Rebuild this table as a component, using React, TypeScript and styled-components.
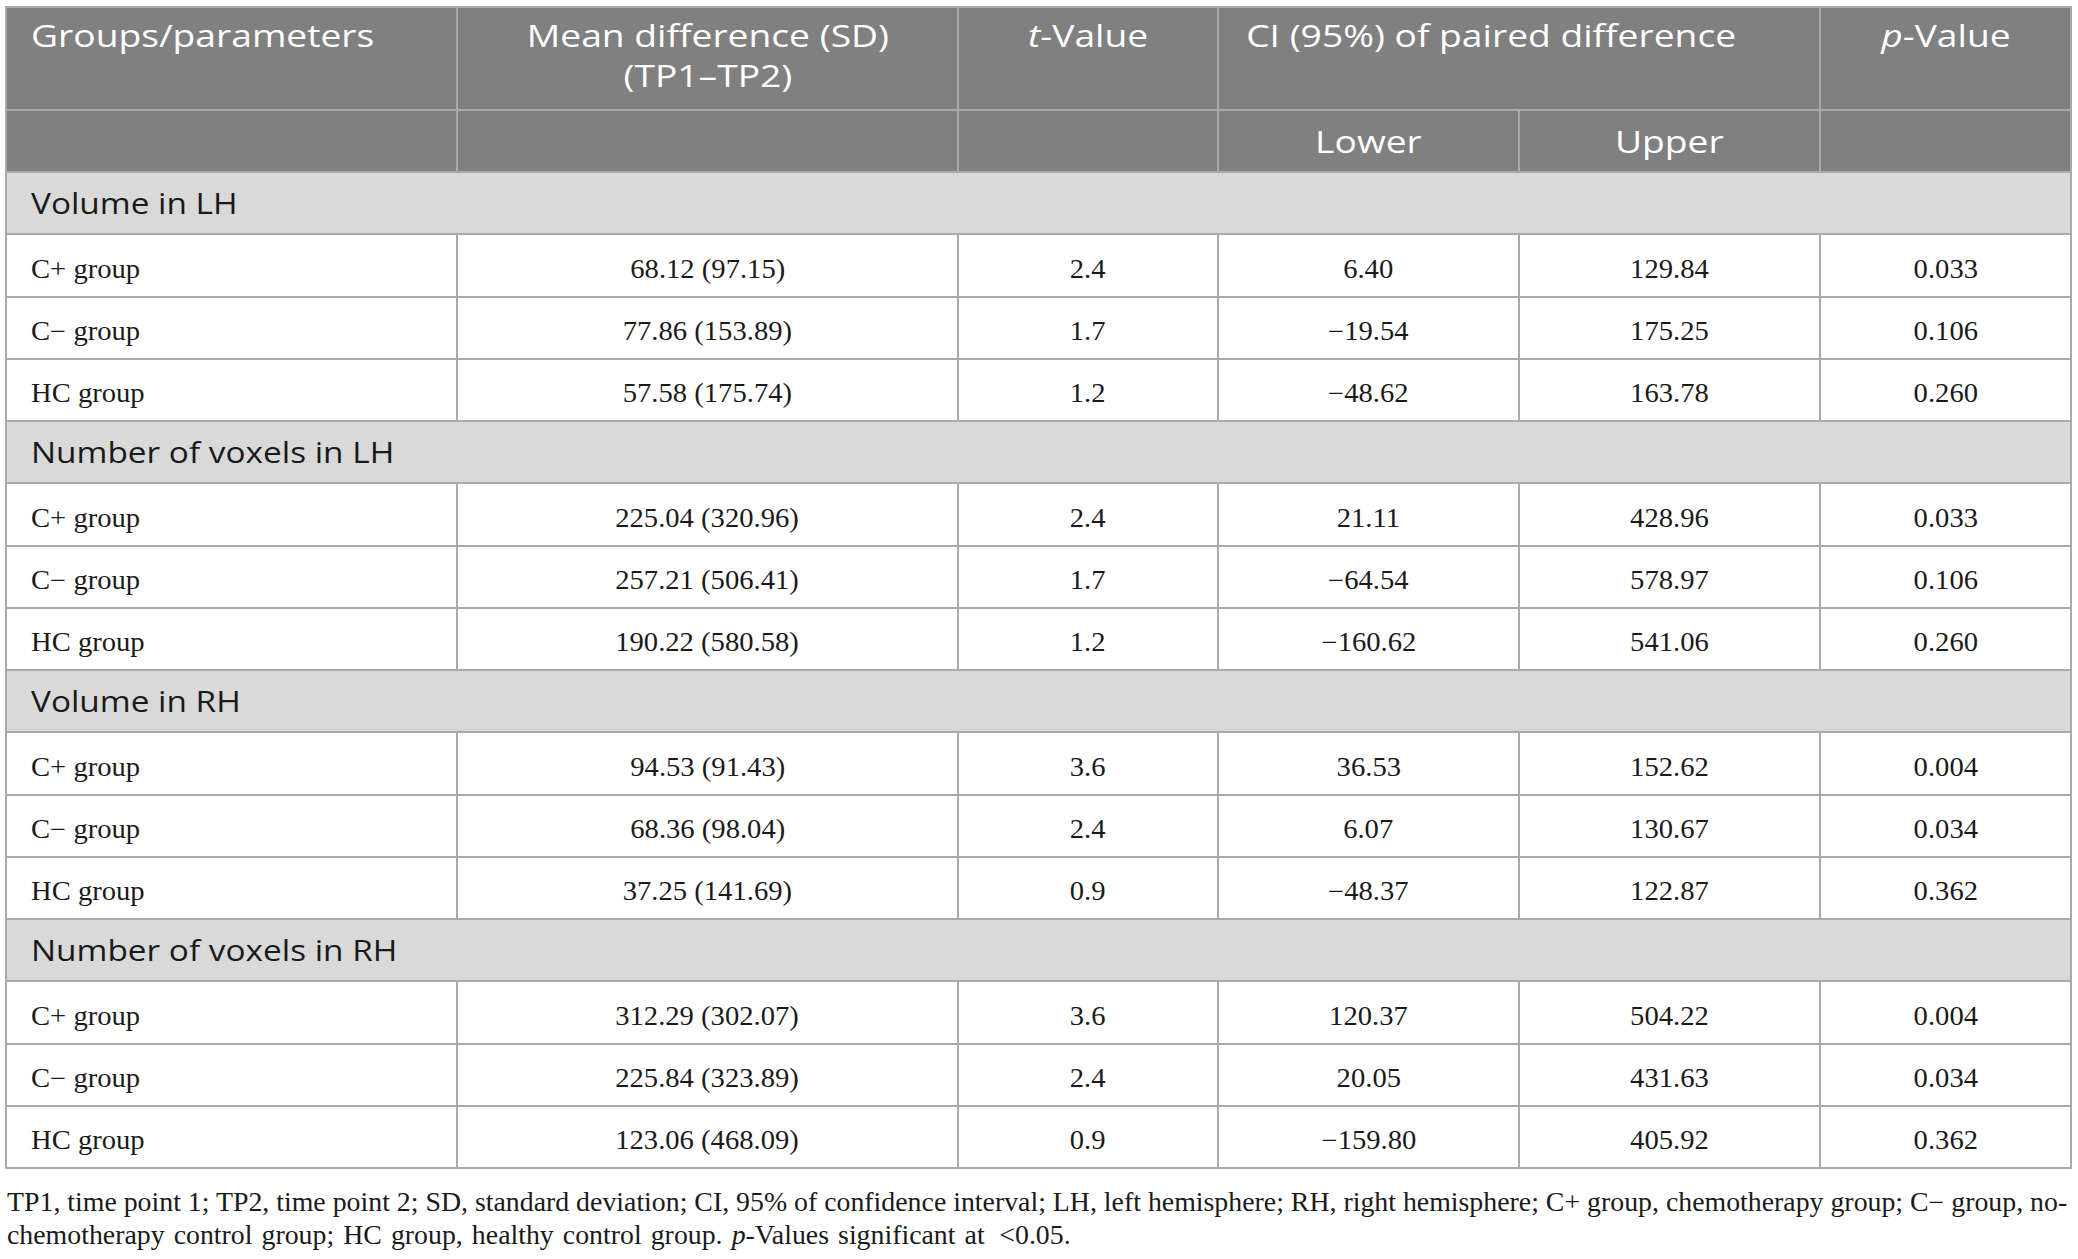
import React from "react";
import styled, { createGlobalStyle, css } from "styled-components";

const GlobalStyle = createGlobalStyle`
  html, body {
    margin: 0;
    padding: 0;
    background: #ffffff;
  }
  body {
    font-family: "Liberation Serif", "Times New Roman", serif;
    color: #1c1c1c;
  }
`;

const SANS = `"Open Sans", "Noto Sans", Arial, sans-serif`;
const SERIF = `"Liberation Serif", "Times New Roman", serif`;
const LINE = "#aaaaaa";

const Page = styled.div`
  box-sizing: border-box;
  width: 2078px;
  padding: 6px 6px 0 5px;
`;

const Grid = styled.div`
  display: grid;
  grid-template-columns: 451px 501px 260px 301px 301px 251px;
  grid-template-rows: 103px 62px;
  grid-auto-rows: 62.25px;
  border-top: 2px solid ${LINE};
  border-left: 2px solid ${LINE};
  width: max-content;
`;

type Align = "left" | "center";

const cellBase = css<{ $align?: Align }>`
  box-sizing: border-box;
  border-right: 2px solid ${LINE};
  border-bottom: 2px solid ${LINE};
  display: flex;
  justify-content: ${(p) => (p.$align === "left" ? "flex-start" : "center")};
  text-align: ${(p) => (p.$align === "left" ? "left" : "center")};
  padding: 0 24px 0 24px;
  min-width: 0;
`;

const HeadCell = styled.div<{ $align?: Align; $span?: number }>`
  ${cellBase};
  grid-column: span ${(p) => p.$span ?? 1};
  align-items: flex-start;
  padding-top: 7px;
  background: #808080;
  color: #ffffff;
  font-family: ${SANS};
  font-size: 31px;
  line-height: 40px;
  font-weight: 400;
`;

const SpanHeadCell = styled(HeadCell)`
  padding-right: 80px;
`;

const SubHeadCell = styled.div<{ $align?: Align }>`
  ${cellBase};
  align-items: center;
  background: #808080;
  color: #ffffff;
  font-family: ${SANS};
  font-size: 31px;
  line-height: 40px;
`;

const SectionCell = styled.div<{ $align?: Align }>`
  ${cellBase};
  grid-column: 1 / -1;
  align-items: center;
  background: #d9d9d9;
  color: #1a1a1a;
  font-family: ${SANS};
  font-size: 29px;
  line-height: 40px;
`;

const BodyCell = styled.div<{ $align?: Align }>`
  ${cellBase};
  align-items: center;
  padding-top: 7px;
  background: #ffffff;
  color: #1a1a1a;
  font-family: ${SERIF};
  font-size: 26.5px;
  line-height: 30px;
`;

const Stretch = styled.span<{ $origin?: Align; $k?: number }>`
  display: inline-block;
  white-space: nowrap;
  transform: scaleX(${(p) => p.$k ?? 1.08});
  transform-origin: ${(p) => (p.$origin === "left" ? "left center" : "center center")};
`;

const Em = styled.i`
  font-style: italic;
`;

const Footer = styled.div`
  margin-top: 17px;
  padding-left: 2px;
`;

const FootText = styled.div`
  width: max-content;
  font-family: ${SERIF};
  font-size: 26.5px;
  line-height: 33px;
  color: #1a1a1a;
  transform: scaleX(1.05);
  transform-origin: left top;
`;

const FootLine = styled.div<{ $loose?: boolean }>`
  white-space: nowrap;
  word-spacing: ${(p) => (p.$loose ? "2px" : "0")};
`;

type Row = [string, string, string, string, string, string];
type Section = { title: string; rows: Row[] };

const sections: Section[] = [
  {
    title: "Volume in LH",
    rows: [
      ["C+ group", "68.12 (97.15)", "2.4", "6.40", "129.84", "0.033"],
      ["C\u2212 group", "77.86 (153.89)", "1.7", "\u221219.54", "175.25", "0.106"],
      ["HC group", "57.58 (175.74)", "1.2", "\u221248.62", "163.78", "0.260"],
    ],
  },
  {
    title: "Number of voxels in LH",
    rows: [
      ["C+ group", "225.04 (320.96)", "2.4", "21.11", "428.96", "0.033"],
      ["C\u2212 group", "257.21 (506.41)", "1.7", "\u221264.54", "578.97", "0.106"],
      ["HC group", "190.22 (580.58)", "1.2", "\u2212160.62", "541.06", "0.260"],
    ],
  },
  {
    title: "Volume in RH",
    rows: [
      ["C+ group", "94.53 (91.43)", "3.6", "36.53", "152.62", "0.004"],
      ["C\u2212 group", "68.36 (98.04)", "2.4", "6.07", "130.67", "0.034"],
      ["HC group", "37.25 (141.69)", "0.9", "\u221248.37", "122.87", "0.362"],
    ],
  },
  {
    title: "Number of voxels in RH",
    rows: [
      ["C+ group", "312.29 (302.07)", "3.6", "120.37", "504.22", "0.004"],
      ["C\u2212 group", "225.84 (323.89)", "2.4", "20.05", "431.63", "0.034"],
      ["HC group", "123.06 (468.09)", "0.9", "\u2212159.80", "405.92", "0.362"],
    ],
  },
];

const SK = 1.2;
const SEC_K = 1.15;

export default function App() {
  return (
    <>
      <GlobalStyle />
      <Page>
        <Grid>
          <HeadCell $align="left">
            <Stretch $origin="left" $k={SK}>Groups/parameters</Stretch>
          </HeadCell>
          <HeadCell>
            <Stretch $k={SK}>
              Mean difference (SD)
              <br />
              (TP1{"\u2013"}TP2)
            </Stretch>
          </HeadCell>
          <HeadCell>
            <Stretch $k={SK}>
              <Em>t</Em>-Value
            </Stretch>
          </HeadCell>
          <SpanHeadCell $span={2}>
            <Stretch $k={SK}>CI (95%) of paired difference</Stretch>
          </SpanHeadCell>
          <HeadCell>
            <Stretch $k={SK}>
              <Em>p</Em>-Value
            </Stretch>
          </HeadCell>

          <SubHeadCell />
          <SubHeadCell />
          <SubHeadCell />
          <SubHeadCell>
            <Stretch $k={SK}>Lower</Stretch>
          </SubHeadCell>
          <SubHeadCell>
            <Stretch $k={SK}>Upper</Stretch>
          </SubHeadCell>
          <SubHeadCell />

          {sections.map((s) => (
            <React.Fragment key={s.title}>
              <SectionCell $align="left">
                <Stretch $origin="left" $k={SEC_K}>{s.title}</Stretch>
              </SectionCell>
              {s.rows.map((r, ri) => (
                <React.Fragment key={ri}>
                  {r.map((v, ci) => (
                    <BodyCell key={ci} $align={ci === 0 ? "left" : "center"}>
                      <Stretch $origin={ci === 0 ? "left" : "center"}>{v}</Stretch>
                    </BodyCell>
                  ))}
                </React.Fragment>
              ))}
            </React.Fragment>
          ))}
        </Grid>
        <Footer>
          <FootText>
            <FootLine>
              TP1, time point 1; TP2, time point 2; SD, standard deviation; CI, 95% of confidence
              interval; LH, left hemisphere; RH, right hemisphere; C+ group, chemotherapy group; C
              {"\u2212"} group, no-
            </FootLine>
            <FootLine $loose>
              chemotherapy control group; HC group, healthy control group. <Em>p</Em>-Values
              significant at {"\u2009"}&lt;0.05.
            </FootLine>
          </FootText>
        </Footer>
      </Page>
    </>
  );
}
